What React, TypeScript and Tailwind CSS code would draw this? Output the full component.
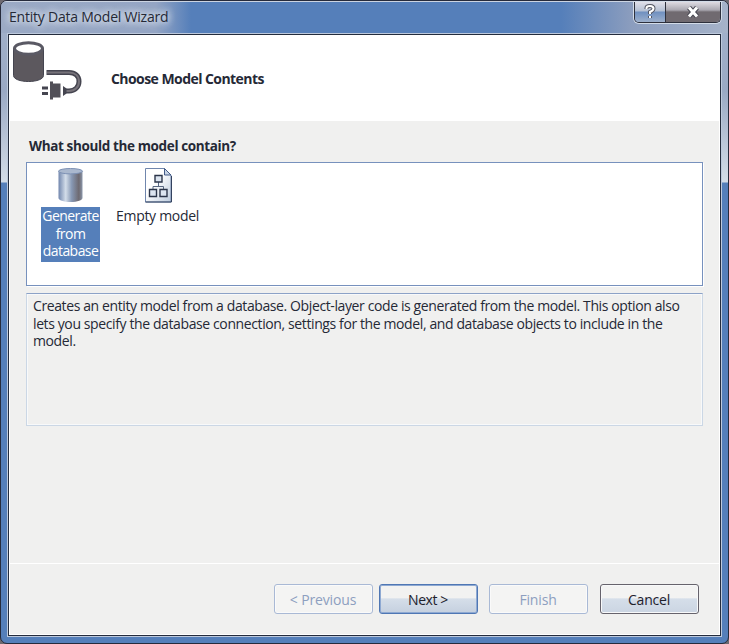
import type { ReactNode } from "react";

function PlugIcon() {
  return (
    <svg width="72" height="62" viewBox="0 0 72 62" fill="none">
      <path d="M1.500 7v27.500c0 3.500 6.500 6 15 6s15-2.500 15-6V7z" fill="#5c585e" stroke="#454550" />
      <ellipse cx="16.500" cy="7.500" rx="14" ry="5.700" fill="#fff" stroke="#5a5964" strokeWidth="3" />
      <path d="M34.500 31.500h22.500c6 0 10 3.500 10 9s-4 9.500-10 9.500h-4" stroke="#454550" strokeWidth="5" />
      <path d="M35 31.500h22c6 0 10 3.500 10 9s-4 9.500-10 9.500h-4" stroke="#77737a" strokeWidth="2" />
      <path d="M51 45l3.500 2.500v5l-3.500 2.500z" fill="#454550" />
      <path d="M38 40.500h3v2h7.500v14h-7.500v2h-3z" fill="#514f57" />
      <path d="M30 47h6M30 52.500h6" stroke="#454550" strokeWidth="3" />
    </svg>
  );
}

function DatabaseIcon() {
  return (
    <svg width="26" height="35" viewBox="0 0 26 35">
      <defs>
        <linearGradient id="cyl">
          <stop offset="0" stopColor="#7186ad" />
          <stop offset=".3" stopColor="#d3dde9" />
          <stop offset=".55" stopColor="#8798b4" />
          <stop offset=".85" stopColor="#6d6970" />
          <stop offset="1" stopColor="#8b97ab" />
        </linearGradient>
      </defs>
      <path d="M.5 3v27c0 2 5 4 12 4s12-2 12-4V3z" fill="url(#cyl)" />
      <ellipse cx="12.500" cy="3.200" rx="12" ry="2.700" fill="#aab8ce" stroke="#7d91b4" />
    </svg>
  );
}

function ModelIcon() {
  return (
    <svg width="28" height="35" viewBox="0 0 28 35" fill="none">
      <defs>
        <linearGradient id="paper" x1="0" y1="0" x2="1" y2="1">
          <stop offset=".4" stopColor="#fff" />
          <stop offset="1" stopColor="#bccbdd" />
        </linearGradient>
      </defs>
      <path d="M1.500.500h19l6.500 6.500v27H1.500z" fill="url(#paper)" stroke="#7086ad" />
      <path d="M1.500 34h26V8" stroke="#33425f" />
      <path d="M20.500.500v6.500h6.500z" fill="#c7d4e5" stroke="#435b87" />
      <path d="M14.500 14v4M9 22v-3.500h10.500V22" stroke="#596882" />
      <path d="M11 7.500h7v6.500h-7zM5.500 21.500h7v7h-7zM16 21.500h7v7h-7z" fill="#dce5f0" stroke="#2b3549" strokeWidth="1.400" />
    </svg>
  );
}

function DialogButton({ children, kind }: { children: ReactNode; kind: "disabled" | "focus" | "normal" }) {
  const look = {
    disabled: "border-[#a9b9d5] bg-[#f4f4f3] text-[#8d9fc0] shadow-[inset_0_0_0_1px_#fafafa] tracking-[-0.150px]",
    focus: "border-[#4f77b4] bg-linear-to-b from-[#f2f2f1] from-45% via-[#d5dee9] via-50% to-[#c5d0df] text-[#1e212c] shadow-[inset_0_0_0_1px_#8ea9d2] tracking-[-0.400px]",
    normal: "border-[#66636c] bg-linear-to-b from-[#f3f3f2] from-45% via-[#d5dee9] via-50% to-[#cbd5e2] text-[#1e212c] shadow-[inset_0_0_0_1px_#f8f9fa] tracking-[-0.200px]",
  }[kind];
  return (
    <button className={`flex h-[30px] w-[99px] items-center justify-center rounded-[3px] border pr-[1px] pt-[2px] text-[14px] ${look}`}>
      {children}
    </button>
  );
}

export default function App() {
  return (
    <div className="h-[644px] w-[729px] overflow-hidden bg-[#6d6970] font-['Open_Sans','Noto_Sans',sans-serif] text-[14px] leading-[17.500px] text-[#252936]">
      <div className="flex h-[644px] flex-col overflow-hidden rounded-[7px] border border-[#262b3c] bg-[linear-gradient(180deg,#a4b3cc_0px,#9aa9c4_90px,#d4dde8_181px,#557fba_182px)]">
        <header className="flex h-[32px] shrink-0 justify-between border-t border-[#cbd4e2] bg-[linear-gradient(90deg,#9baac5_0px,#94a5c4_155px,#557fba_190px,#557fba_560px,#8b9dbe_630px,#a6b3c9_728px)] pl-2">
          <h1 className="pt-[6px] leading-[18px] tracking-[-0.220px] [text-shadow:0_0_7px_#dce4ee,0_0_7px_#dce4ee,0_0_10px_#dce4ee]">
            Entity Data Model Wizard
          </h1>
          <div className="mr-[7px] flex h-[21px] overflow-hidden rounded-b-[5px] border border-t-0 border-[#2d303c] shadow-[0_0_0_1px_#d3dce8]">
            <button className="flex w-[31px] items-center justify-center border-r border-[#2d303c] bg-[linear-gradient(180deg,#e0dfe9_0px,#b4c0d3_9px,#6f90c0_10px,#9db0cc_20px)]">
              <svg width="12" height="16" viewBox="0 0 12 16" fill="none">
                <path d="M2.500 5V4q0-2 3.500-2t3.500 2.500Q9.500 6.500 6 8v2M6 12v2" stroke="#555763" strokeWidth="4" />
                <path d="M2.500 5V4q0-2 3.500-2t3.500 2.500Q9.500 6.500 6 8v2M6 12v2" stroke="#fff" strokeWidth="2" />
              </svg>
            </button>
            <button className="flex w-[54px] items-center justify-center bg-[linear-gradient(180deg,#dedbe2_0px,#aaa8b1_8px,#706a70_10px,#706a70_20px)]">
              <svg width="14" height="12" viewBox="0 0 14 12" fill="none">
                <path d="M3 1.500l8 9M11 1.500l-8 9" stroke="#484852" strokeWidth="5" />
                <path d="M3 1.500l8 9M11 1.500l-8 9" stroke="#fff" strokeWidth="3" />
              </svg>
            </button>
          </div>
        </header>
        <div className="mx-[6px] mb-[6px] flex min-h-0 flex-1 flex-col border border-[#bdc9dc]">
          <main className="flex min-h-0 flex-1 flex-col border border-[#242c3d] bg-[#f0f0ef]">
            <section className="flex h-[86px] shrink-0 items-start bg-white pl-[3px] pt-[6px]">
              <PlugIcon />
              <h2 className="ml-[27px] mt-[29px] font-bold tracking-[-0.560px]">Choose Model Contents</h2>
            </section>
            <section className="flex flex-1 flex-col border-x border-white pl-[16px] pr-[16px] pt-[17px]">
              <h3 className="ml-[3px] h-[24px] text-[13.500px] font-bold tracking-[-0.370px]">What should the model contain?</h3>
              <div className="flex h-[124px] items-start border border-[#7791bd] bg-white pl-[14px] pt-[5px] shadow-[1px_1px_0_#fff]">
                <div className="flex w-[59px] flex-col items-center">
                  <DatabaseIcon />
                  <div className="mt-[4px] h-[55px] w-[59px] bg-[#557fba] text-center tracking-[-0.550px] text-white">Generate from database</div>
                </div>
                <div className="ml-[13px] flex w-[90px] flex-col items-center">
                  <ModelIcon />
                  <div className="mt-[4px] whitespace-nowrap pr-[1px] tracking-[-0.300px]">Empty model</div>
                </div>
              </div>
              <div className="mt-[7px] h-[133px] whitespace-nowrap border border-t-[#8ca2c7] border-[#cbd7e5] pl-[6px] pt-[3px] shadow-[inset_0_0_0_1px_#f8f9fa]">
                <p className="tracking-[-0.390px]">Creates an entity model from a database. Object-layer code is generated from the model. This option also</p>
                <p className="tracking-[-0.390px]">lets you specify the database connection, settings for the model, and database objects to include in the</p>
                <p className="tracking-[-0.390px]">model.</p>
              </div>
            </section>
            <footer className="flex h-[72px] shrink-0 items-start justify-end border border-white pr-[20px] pt-[20px]">
              <DialogButton kind="disabled">&lt; Previous</DialogButton>
              <div className="ml-[6px]"><DialogButton kind="focus">Next &gt;</DialogButton></div>
              <div className="ml-[11px]"><DialogButton kind="disabled">Finish</DialogButton></div>
              <div className="ml-[12px]"><DialogButton kind="normal">Cancel</DialogButton></div>
            </footer>
          </main>
        </div>
      </div>
    </div>
  );
}
